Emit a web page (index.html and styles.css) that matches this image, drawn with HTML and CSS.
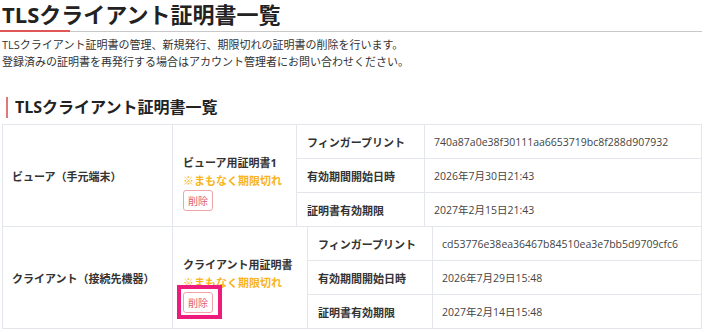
FILE: index.html
```html
<!DOCTYPE html>
<html lang="ja">
<head>
<meta charset="utf-8">
<link rel="stylesheet" href="styles.css">
</head>
<body>
<div class="page">
  <h1 class="title">TLSクライアント証明書一覧</h1>
  <p class="desc">TLSクライアント証明書の管理、新規発行、期限切れの証明書の削除を行います。<br>登録済みの証明書を再発行する場合はアカウント管理者にお問い合わせください。</p>
  <h2 class="section">TLSクライアント証明書一覧</h2>
  <div class="certs">
    <div class="cert-row cert-row--a">
      <div class="cell device">ビューア（手元端末）</div>
      <div class="cell name">
        <div class="name-title">ビューア用証明書1</div>
        <div class="warn">※まもなく期限切れ</div>
        <div class="btn-wrap"><button class="del">削除</button></div>
      </div>
      <div class="cell label">フィンガープリント</div>
      <div class="cell value">740a87a0e38f30111aa6653719bc8f288d907932</div>
      <div class="cell label">有効期間開始日時</div>
      <div class="cell value">2026年7月30日21:43</div>
      <div class="cell label">証明書有効期限</div>
      <div class="cell value">2027年2月15日21:43</div>
    </div>
    <div class="cert-row cert-row--b">
      <div class="cell device">クライアント（接続先機器）</div>
      <div class="cell name">
        <div class="name-title">クライアント用証明書</div>
        <div class="warn">※まもなく期限切れ</div>
        <div class="btn-wrap"><button class="del">削除</button><span class="highlight"></span></div>
      </div>
      <div class="cell label">フィンガープリント</div>
      <div class="cell value">cd53776e38ea36467b84510ea3e7bb5d9709cfc6</div>
      <div class="cell label">有効期間開始日時</div>
      <div class="cell value">2026年7月29日15:48</div>
      <div class="cell label">証明書有効期限</div>
      <div class="cell value">2027年2月14日15:48</div>
    </div>
  </div>
</div>
</body>
</html>
```
FILE: styles.css
```css
* { box-sizing: border-box; }
html, body { margin: 0; padding: 0; background: #fff; }
body {
  font-family: "Open Sans", "Noto Sans CJK JP", sans-serif;
  color: #333;
}
.page { padding: 0 2px; }
.title {
  position: relative;
  margin: 0;
  font-size: 22px;
  line-height: 28px;
  font-weight: 700;
  color: #222;
  padding-bottom: 3px;
  border-bottom: 1px solid #c8c8c8;
}
.title::after {
  content: "";
  position: absolute;
  left: -2px;
  bottom: -1px;
  width: 70px;
  height: 2px;
  background: #e05555;
}
.desc {
  margin: 4px 0 0;
  font-size: 11px;
  line-height: 17px;
  color: #333;
}
.section {
  margin: 27px 0 6px 4px;
  border-left: 2px solid #e07a7a;
  padding-left: 7px;
  font-size: 16px;
  line-height: 21px;
  font-weight: 700;
  color: #222;
}
.certs {
  border-top: 1px solid #e3e6ea;
  border-left: 1px solid #e3e6ea;
}
.cert-row {
  display: grid;
  grid-template-rows: repeat(3, 34px);
}
.cert-row--a { grid-template-columns: 170px 124px 128px 1fr; }
.cert-row--b { grid-template-columns: 170px 135px 125px 1fr; }
.cell {
  border-right: 1px solid #e3e6ea;
  border-bottom: 1px solid #e3e6ea;
  font-size: 11px;
  display: flex;
  align-items: center;
  padding: 0 10px;
}
.device {
  grid-row: 1 / 4;
  grid-column: 1;
  font-weight: 700;
  padding-left: 9px;
}
.name {
  grid-row: 1 / 4;
  grid-column: 2;
  flex-direction: column;
  align-items: flex-start;
  justify-content: center;
  padding-top: 13px;
  padding-left: 10px;
}
.label { font-weight: 700; padding-left: 10px; }
.value { color: #444; padding-left: 9px; font-size: 10.5px; }
.name-title { font-weight: 700; line-height: 18px; }
.warn { font-weight: 700; color: #f7b51c; line-height: 18px; }
.btn-wrap { position: relative; margin-top: 0; }
.del {
  font-family: "Noto Sans CJK JP", sans-serif;
  font-size: 10px;
  line-height: 19px;
  height: 21px;
  padding: 0 4px;
  color: #e0606e;
  background: #fff;
  border: 1px solid #f0a3ab;
  border-radius: 3px;
  display: block;
}
.highlight {
  position: absolute;
  left: -6px;
  top: -7px;
  right: -9px;
  bottom: -6px;
  border: 4px solid #ee1a7c;
}
```
